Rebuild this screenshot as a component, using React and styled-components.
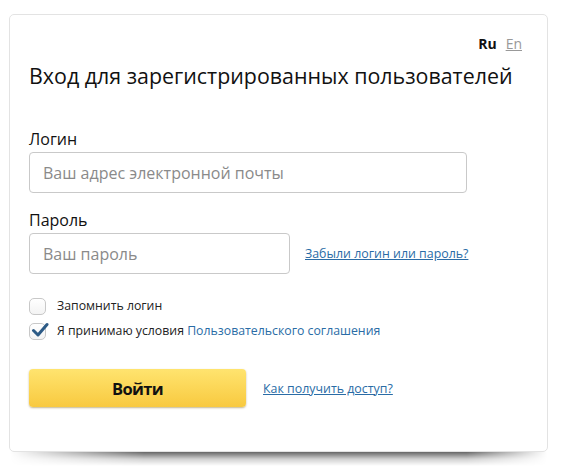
import React from 'react'
import styled, { createGlobalStyle } from 'styled-components'

const Global = createGlobalStyle`
  body {
    margin: 0;
    background: #fff;
    font-family: "Open Sans", "Noto Sans", sans-serif;
    color: #1a1a1a;
  }
`;

const Page = styled.div`
  width: 561px;
  height: 467px;
  padding: 14px 0 0 9px;
  box-sizing: border-box;
`;

const Card = styled.div`
  position: relative;
  width: 539px;
  height: 438px;
  box-sizing: border-box;
  background: #fff;
  border: 1px solid #e3e3e3;
  border-radius: 5px;
  padding: 20px 20px 0 19px;
  display: flex;
  flex-direction: column;

  &::after {
    content: '';
    position: absolute;
    left: 0;
    right: 0;
    bottom: -15px;
    height: 14px;
    background: linear-gradient(to bottom, rgba(0,0,0,0.6), rgba(0,0,0,0.18) 50%, rgba(0,0,0,0));
    -webkit-mask-image: linear-gradient(to right, transparent 0%, #000 25%, #000 85%, transparent 100%);
    mask-image: linear-gradient(to right, transparent 0%, #000 25%, #000 85%, transparent 100%);
    z-index: -1;
  }
`;

const LangRow = styled.div`
  display: flex;
  justify-content: flex-end;
  gap: 9px;
  font-size: 14px;
  line-height: 18px;
  padding-right: 5px;
`;

const Lang = styled.a`
  font-weight: ${({ active }) => (active ? 700 : 400)};
  color: ${({ active }) => (active ? '#111' : '#999')};
  text-decoration: ${({ active }) => (active ? 'none' : 'underline')};
`;

const Title = styled.h1`
  margin: 8px 0 0;
  font-size: 21.4px;
  font-weight: 400;
  line-height: 30px;
  color: #111;
`;

const Label = styled.div`
  font-size: 16px;
  line-height: 20px;
  margin-top: ${({ top }) => top}px;
  margin-bottom: 3px;
  color: #111;
`;

const Row = styled.div`
  display: flex;
  align-items: center;
  gap: ${({ gap }) => gap || 0}px;
`;

const Input = styled.input`
  box-sizing: border-box;
  width: ${({ w }) => w}px;
  height: 41px;
  border: 1px solid #c9c9c9;
  border-radius: 4px;
  padding: 0 13px;
  font-family: inherit;
  font-size: 16px;
  color: #333;
  outline: none;
  &::placeholder {
    color: #8a8a8a;
  }
`;

const Link = styled.a`
  font-size: 12.4px;
  color: #2a6ca6;
  text-decoration: underline;
  cursor: pointer;
`;

const Checks = styled.div`
  display: flex;
  flex-direction: column;
  gap: 7px;
  margin-top: 23px;
`;

const CheckRow = styled.label`
  display: flex;
  align-items: center;
  gap: 11px;
  font-size: 12.3px;
  line-height: 18px;
  color: #222;
`;

const Box = styled.span`
  position: relative;
  width: 17px;
  height: 17px;
  box-sizing: border-box;
  border: 1px solid #c8c8c8;
  border-radius: 5px;
  background: linear-gradient(#fff, #f3f3f3);
  flex: none;

  svg {
    position: absolute;
    left: 1px;
    top: -2px;
  }
`;

const Agree = styled.span`
  color: #2a6ca6;
`;

const Actions = styled.div`
  display: flex;
  align-items: center;
  gap: 17px;
  margin-top: 29px;
`;

const Button = styled.button`
  width: 217px;
  height: 38px;
  border: none;
  border-radius: 4px;
  background: linear-gradient(to bottom, #ffe46f, #f8c93f);
  box-shadow: 0 1px 2px rgba(120, 90, 0, 0.45);
  font-family: inherit;
  font-size: 16.5px;
  letter-spacing: -0.6px;
  font-weight: 700;
  color: #111;
  cursor: pointer;
`;

const Check = () => (
  <svg width="18" height="16" viewBox="0 0 18 16">
    <path d="M2.5 8.5 L7 13 L16 2.5" fill="none" stroke="#2d5b86" strokeWidth="3" strokeLinecap="round" strokeLinejoin="round" />
  </svg>
);

export default function App() {
  return (
    <Page>
      <Global />
      <Card>
        <LangRow>
          <Lang active>Ru</Lang>
          <Lang>En</Lang>
        </LangRow>
        <Title>Вход для зарегистрированных пользователей</Title>
        <Label top={38}>Логин</Label>
        <Input w={438} placeholder="Ваш адрес электронной почты" />
        <Label top={17}>Пароль</Label>
        <Row gap={15}>
          <Input w={261} type="password" placeholder="Ваш пароль" />
          <Link>Забыли логин или пароль?</Link>
        </Row>
        <Checks>
          <CheckRow>
            <Box />
            Запомнить логин
          </CheckRow>
          <CheckRow>
            <Box><Check /></Box>
            <span>Я принимаю условия <Agree>Пользовательского соглашения</Agree></span>
          </CheckRow>
        </Checks>
        <Actions>
          <Button>Войти</Button>
          <Link>Как получить доступ?</Link>
        </Actions>
      </Card>
    </Page>
  );
}
